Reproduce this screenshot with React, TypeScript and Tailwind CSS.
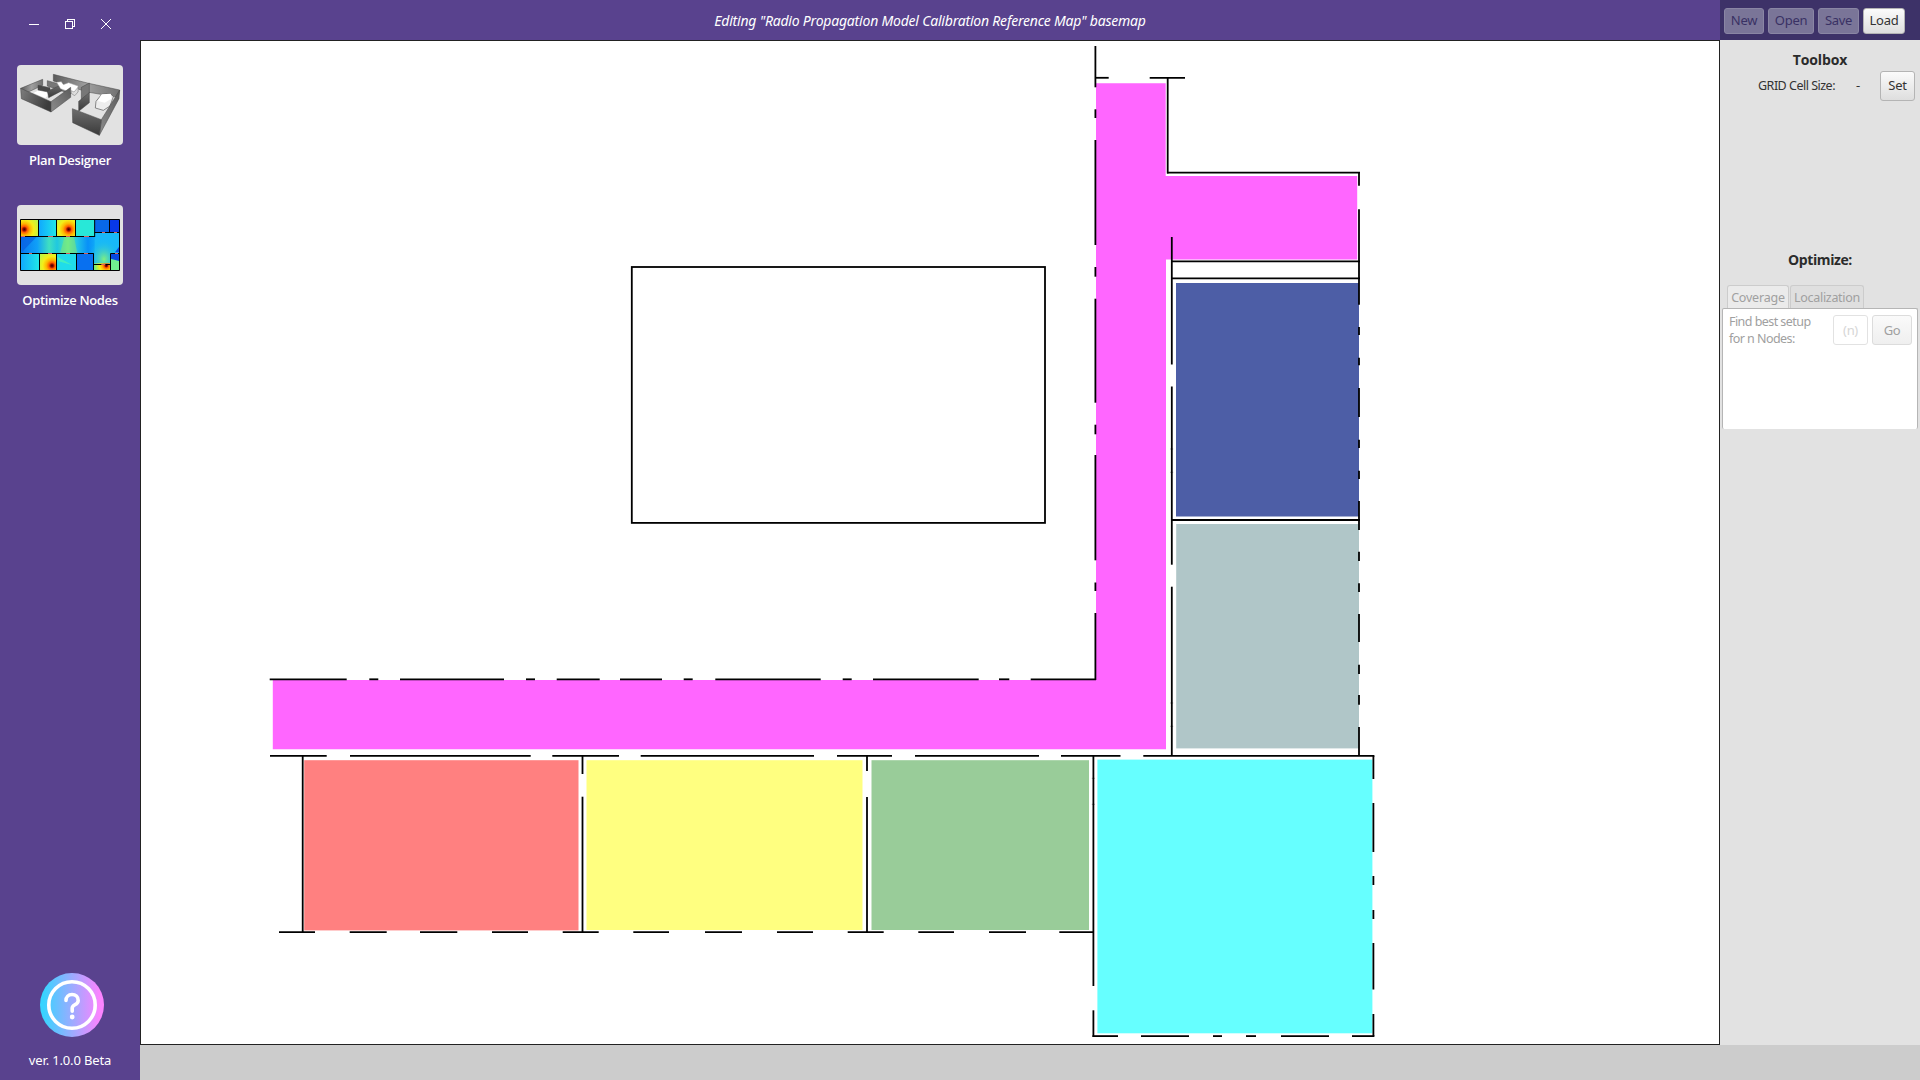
import React from 'react';

type Seg = [number, number];

const vWalls: { x: number; segs: Seg[] }[] = [
  { x: 1095.4, segs: [[46, 87.3], [109.3, 118], [140, 245], [267, 276.7], [298.7, 402.7], [424.7, 434.3], [455, 560.3], [582.5, 591], [613, 680]] },
  { x: 1167.7, segs: [[77, 173.5]] },
  { x: 1171.8, segs: [[237, 364.5], [386.5, 564.7], [586.7, 756]] },
  { x: 1359, segs: [[172, 185.7], [209.3, 304.7], [327, 335], [357.7, 365.3], [388, 417], [439.7, 448], [470.7, 479], [501, 530], [551.7, 561], [583.3, 592], [614, 642], [664.7, 674], [695, 704.7], [727, 756]] },
  { x: 302.7, segs: [[756, 932]] },
  { x: 582.5, segs: [[756, 774], [796.7, 932]] },
  { x: 867, segs: [[756, 771], [797, 932]] },
  { x: 1093.4, segs: [[756, 986], [1010.3, 1037]] },
  { x: 1373.4, segs: [[756, 779], [803, 852], [876, 885], [910, 919], [943, 989.5], [1014, 1036]] },
];

const hWalls: { y: number; segs: Seg[] }[] = [
  { y: 77.8, segs: [[1095, 1108.7], [1149.7, 1185]] },
  { y: 172.7, segs: [[1167, 1360]] },
  { y: 261.4, segs: [[1171, 1360]] },
  { y: 278.4, segs: [[1171, 1360]] },
  { y: 520, segs: [[1171, 1360]] },
  { y: 679.3, segs: [[269.7, 346.7], [369.3, 378.3], [400, 504], [526, 535], [556.7, 599.7], [620, 662], [683.7, 692.7], [715.3, 820.7], [842.7, 851.7], [873, 978.7], [999, 1009.3], [1030.7, 1096]] },
  { y: 755.8, segs: [[270, 326.7], [350, 530.7], [552.3, 619], [640.7, 814], [837, 892], [915, 1039], [1061, 1120.5], [1143.3, 1374.4]] },
  { y: 932.1, segs: [[279, 315], [349.7, 386.7], [420, 457.3], [492, 528], [562.7, 598.7], [633.3, 669], [705, 742], [777, 813], [847.7, 883.7], [918.3, 954], [989, 1026], [1059.3, 1093.5]] },
  { y: 1036.1, segs: [[1092.5, 1118], [1141, 1189], [1213, 1222], [1246, 1256], [1281, 1329], [1352, 1374.4]] },
];

// Wall joints, drawn as faint ticks across a vertical wall.
const joints: Seg[] = [[1171.8, 449], [1171.8, 472.3], [1171.8, 703], [1171.8, 726.3], [1093.4, 778.3], [1093.4, 804.3]];

function FloorPlan() {
  return (
    <svg className="block h-full w-full" viewBox="141 41 1578 1003">
      <path d="M1096 83.3H1165.7V176H1357.2V259.6H1166V749.3H272.8V680H1096Z" fill="#ff66ff" />
      <rect x="1176" y="283" width="183" height="233.5" fill="#4d5ea6" />
      <rect x="1176.2" y="524" width="182.8" height="224.4" fill="#b0c6c8" />
      <rect x="304.2" y="760.2" width="274.3" height="170.2" fill="#ff8080" />
      <rect x="586.5" y="760.2" width="276" height="169.8" fill="#ffff80" />
      <rect x="871.5" y="760.2" width="217.5" height="169.8" fill="#99cc99" />
      <rect x="1097.4" y="759.6" width="275" height="273.7" fill="#66ffff" />
      <g stroke="#000" strokeWidth="1.8">
        {vWalls.flatMap((w) => w.segs.map(([a, b]) => <line key={`v${w.x}-${a}`} x1={w.x} x2={w.x} y1={a} y2={b} />))}
        {hWalls.flatMap((w) => w.segs.map(([a, b]) => <line key={`h${w.y}-${a}`} y1={w.y} y2={w.y} x1={a} x2={b} />))}
        <rect x="631.8" y="267" width="413.2" height="255.9" fill="none" />
      </g>
      <g stroke="#000" strokeOpacity="0.35" strokeWidth="1">
        {joints.map(([x, y]) => <line key={`j${y}`} x1={x - 1.6} x2={x + 1.4} y1={y} y2={y} />)}
      </g>
    </svg>
  );
}

function PlanThumb() {
  return (
    <svg className="block h-full w-full" viewBox="51 195 318 240">
      <defs>
        <linearGradient id="wa" x1="0" y1="0" x2="1" y2="0.3"><stop offset="0" stopColor="#7d7d7d" /><stop offset="1" stopColor="#3c3c3c" /></linearGradient>
        <linearGradient id="wb" x1="0" y1="1" x2="1" y2="0"><stop offset="0" stopColor="#8c8c8c" /><stop offset="1" stopColor="#5c5c5c" /></linearGradient>
        <linearGradient id="wc" x1="0" y1="0" x2="1" y2="0"><stop offset="0" stopColor="#5a5a5a" /><stop offset="0.5" stopColor="#a0a0a0" /><stop offset="1" stopColor="#707070" /></linearGradient>
        <linearGradient id="wd" x1="0" y1="0" x2="0" y2="1"><stop offset="0" stopColor="#6e6e6e" /><stop offset="1" stopColor="#3a3a3a" /></linearGradient>
      </defs>
      <g stroke="#444" strokeWidth="1.5" strokeLinejoin="round">
        <path d="M62 265L128 238V256L72 282Z" fill="url(#wc)" />
        <path d="M142 242L212 262V282L142 258Z" fill="#777" />
        <path d="M160 223L262 249L359 270L354 292L262 276L160 243Z" fill="url(#wc)" />
        <path d="M100 279L118 270L150 280L136 294Z" fill="#fff" stroke="none" />
        <path d="M114 256L150 263V277L114 270Z" fill="#484848" />
        <path d="M142 273L186 254V272L146 293Z" fill="url(#wd)" />
        <path d="M170 247L184 245L190 254L206 248L234 258V276L224 287L208 276L182 266Z" fill="#fff" stroke="#aaa" />
        <path d="M214 272L222 276L234 262V276L224 287L214 280Z" fill="#ddd" stroke="#777" />
        <path d="M62 265L153 305V336L64 296Z" fill="url(#wa)" />
        <path d="M153 305L212 262V292L153 336Z" fill="url(#wb)" />
        <path d="M244 262L268 249V279L244 300Z" fill="#777" />
        <path d="M236 304L268 278V308L236 334Z" fill="url(#wd)" />
        <path d="M305 283L332 281L340 290L330 318L310 331L286 324L288 304Z" fill="#ededed" stroke="#555" strokeWidth="2" />
        <path d="M305 283L332 281L334 296L314 308L294 303Z" fill="#fff" stroke="none" />
        <path d="M359 270L304 359L298 406L357 296Z" fill="url(#wb)" />
        <path d="M217 326L304 359L298 406L218 368Z" fill="url(#wd)" />
      </g>
    </svg>
  );
}

function HeatThumb() {
  const hot: [number, number, number, number, number, number][] = [
    [61, 658, 54, 51, 73, 688],
    [170, 658, 57, 51, 206, 688],
    [118, 761, 52, 50, 156, 797],
    [281, 761, 50, 50, 319, 797],
  ];
  return (
    <svg className="block h-full w-full" viewBox="51 615 318 240">
      <defs>
        {hot.map(([, , , , cx, cy], i) => (
          <radialGradient key={i} id={`hot${i}`} gradientUnits="userSpaceOnUse" cx={cx} cy={cy} r={i === 3 ? 36 : 50}>
            <stop offset="0" stopColor="#300" /><stop offset="0.1" stopColor="#a01000" /><stop offset="0.18" stopColor="#ff5a00" />
            <stop offset="0.34" stopColor="#ffb400" /><stop offset="0.56" stopColor="#f4ee18" /><stop offset="1" stopColor={i === 3 ? '#70f080' : '#b0f850'} />
          </radialGradient>
        ))}
        <linearGradient id="cy" x1="0" x2="1" y1="0" y2="0"><stop offset="0" stopColor="#10a8ff" /><stop offset="1" stopColor="#20e8e8" /></linearGradient>
        <linearGradient id="hall" x1="0" x2="1" y1="0" y2="0">
          <stop offset="0" stopColor="#0878f0" /><stop offset="0.17" stopColor="#10a0f8" /><stop offset="0.29" stopColor="#40e0c0" /><stop offset="0.37" stopColor="#20c8e0" />
          <stop offset="0.48" stopColor="#58e8a8" /><stop offset="0.58" stopColor="#20c0e8" /><stop offset="0.68" stopColor="#0890f8" /><stop offset="0.85" stopColor="#18c8f8" /><stop offset="1" stopColor="#1090f8" />
        </linearGradient>
        <radialGradient id="glow"><stop offset="0" stopColor="#80f080" /><stop offset="1" stopColor="#10b8f8" stopOpacity="0" /></radialGradient>
        <clipPath id="plan"><rect x="61" y="658" width="298" height="153" /></clipPath>
      </defs>
      <g clipPath="url(#plan)">
        <rect x="61" y="658" width="298" height="153" fill="url(#hall)" />
        <rect x="284" y="697" width="75" height="114" fill="#18b8f8" />
        <ellipse cx="312" cy="778" rx="48" ry="62" fill="url(#glow)" />
        <path d="M62 710L110 710L66 756Z" fill="#0860e0" opacity=".7" />
        <path d="M194 710H222L232 760H180Z" fill="#a0f050" opacity=".4" />
        <rect x="116" y="658" width="54" height="51" fill="url(#cy)" />
        <rect x="227" y="658" width="57" height="51" fill="#28e8d8" />
        <rect x="284" y="658" width="45" height="39" fill="#0868e8" />
        <rect x="329" y="658" width="30" height="39" fill="#0838e8" />
        <rect x="61" y="761" width="57" height="50" fill="url(#cy)" />
        <rect x="170" y="761" width="60" height="50" fill="#20dcea" />
        <path d="M172 770L218 796L176 784Z" fill="#50f8b0" opacity=".7" />
        <rect x="230" y="761" width="51" height="50" fill="#0870f0" />
        <rect x="332" y="778" width="27" height="33" fill="#70f090" />
        <path d="M332 761H359V784L332 776ZM345 757L359 738V757Z" fill="#0848e0" />
        {hot.map(([x, y, w, h], i) => <rect key={i} x={x} y={i === 3 ? 790 : y} width={w} height={i === 3 ? 21 : h} fill={`url(#hot${i})`} />)}
      </g>
      <path d="M61.5 658.5H358.5V811.5H61.5ZM61 709.500H284M284 658V711M284 697.500H358M115.500 658V709M169.500 658V709M226.500 658V709M328.500 658V697M61 760.500H281M118.500 760V811M169.500 760V811M229.500 760V811M280.500 760V811M281 793.500H331M331.500 811V760.500H358" fill="none" stroke="#000" strokeWidth="3" />
      <path d="M63 709.500h12M144 709.500h15M198 709.500h12M252 709.500h15M87 760.500h9M144 760.500h12M198 760.500h12M252 760.500h12M306 697.500h9M342 697.500h9M345 760.500h9M304 793.500h12" stroke="#d86060" strokeWidth="3" />
    </svg>
  );
}

function HelpIcon() {
  return (
    <svg className="block size-16" viewBox="0 0 64 64">
      <defs>
        <linearGradient id="help" x1="0" x2="1" y1="0" y2="0"><stop offset="0.05" stopColor="#37d4ff" /><stop offset="0.93" stopColor="#fb84ff" /></linearGradient>
      </defs>
      <circle cx="32" cy="32" r="32" fill="url(#help)" />
      <g fill="none" stroke="#fff" strokeLinecap="round" strokeLinejoin="round">
        <circle cx="32" cy="32" r="23.200" strokeWidth="3.600" />
        <path d="M26 27.500C26 24 28.500 21.500 32 21.500S38.200 24 38.200 27.400C38.200 32 32.200 31.500 32.200 35V38.200" strokeWidth="3.600" />
      </g>
      <circle cx="32.200" cy="44" r="2.400" fill="#fff" />
    </svg>
  );
}

const base = 'flex shrink-0 items-center justify-center whitespace-nowrap rounded-[3px] border text-[13px] tracking-[-0.3px]';
const raised = 'border-[#b4b4b4] bg-linear-to-b from-[#fbfbfb] to-[#dedede] text-[#333]';

export default function App() {
  return (
    <div className="flex h-[1080px] w-[1920px] overflow-hidden bg-[#59428e] font-['Noto_Sans',sans-serif] text-[13px] text-[#333]">
      <aside className="flex w-[140px] shrink-0 flex-col text-white">
        <div className="flex h-[65px] pt-[19px] pl-[29px]">
          <svg className="block h-[10px] w-[82px]" viewBox="0 0 82 10" fill="none" stroke="#fff" strokeWidth="1" shapeRendering="crispEdges">
            <path d="M0 5.500H10M36.500 2.500H43.500V9.500H36.500ZM38.500 2.500V0.500H45.500V7.500H43.500" />
            <path d="M72 0L82 10M82 0L72 10" shapeRendering="auto" />
          </svg>
        </div>
        <div className="ml-[17px] h-20 w-[106px] overflow-hidden rounded-[4px] bg-[#e2e2e2]"><PlanThumb /></div>
        <div className="h-[60px] pt-[5px] text-center font-['Open_Sans',sans-serif] text-[13px] leading-5 font-semibold tracking-[-0.35px]">Plan Designer</div>
        <div className="ml-[17px] h-20 w-[106px] overflow-hidden rounded-[4px] bg-[#e2e2e2]"><HeatThumb /></div>
        <div className="pt-[5px] text-center font-['Open_Sans',sans-serif] text-[13px] leading-5 font-semibold tracking-[-0.35px]">Optimize Nodes</div>
        <div className="mt-auto flex h-[107px] flex-col pl-[40px]"><HelpIcon /></div>
        <div className="-mt-[30px] h-[30px] text-center text-[13px] leading-5 tracking-[-0.15px]">ver. 1.0.0 Beta</div>
      </aside>
      <div className="flex w-[1780px] flex-col">
        <div className="flex h-[1045px]">
          <main className="flex w-[1580px] flex-col">
            <header className="flex h-10 items-center justify-center text-[14px] tracking-[-0.21px] text-white italic"><span>Editing "Radio Propagation Model Calibration Reference Map" basemap</span></header>
            <div className="h-[1005px] border border-[#222] bg-white"><FloorPlan /></div>
          </main>
          <aside className="flex w-[200px] flex-col bg-[#e2e2e2]">
            <div className="flex h-10 gap-1 bg-[#3d3268] pt-2 pl-1">
              <button className={`${base} h-[26px] w-10 border-[#8a86a4] bg-[#7a7598] text-[#393164]`}>New</button>
              <button className={`${base} h-[26px] w-[46px] border-[#8a86a4] bg-[#7a7598] text-[#393164]`}>Open</button>
              <button className={`${base} h-[26px] w-[41px] border-[#8a86a4] bg-[#7a7598] text-[#393164]`}>Save</button>
              <button className={`${base} ${raised} h-[26px] w-[42px]`}>Load</button>
            </div>
            <div className="h-[30px] pt-[10px] text-center font-['Open_Sans',sans-serif] text-[14px] leading-5 font-bold tracking-[-0.15px] text-[#2b2b2b]">Toolbox</div>
            <div className="flex h-[32px] items-center pr-[5px] pl-[38px]">
              <span className="w-[98px] whitespace-nowrap text-[12.5px] tracking-[-0.5px]">GRID Cell Size:</span>
              <span>-</span>
              <button className={`${base} ${raised} ml-auto h-[30px] w-[35px]`}>Set</button>
            </div>
            <div className="mt-[148px] h-[35px] text-center font-['Open_Sans',sans-serif] text-[14px] leading-5 font-bold tracking-[-0.4px] text-[#2b2b2b]">Optimize:</div>
            <div className="flex h-[23px] gap-px pl-[7px] text-[12.5px] tracking-[-0.2px] text-[#a0a0a0]">
              <div className="flex w-[62px] items-center justify-center rounded-t-[3px] border border-b-0 border-[#ccc] bg-[#ebebeb] pt-[2px]">Coverage</div>
              <div className="flex w-[74px] items-center justify-center rounded-t-[3px] border border-b-0 border-[#ccc] bg-[#dfdfdf] pt-[2px] tracking-[-0.3px]">Localization</div>
            </div>
            <div className="mx-[2px] flex h-[121px] items-start rounded-[2px] border border-b-0 border-[#b5b5b5] bg-white pt-[6px] pr-[5px] pl-[6px] text-[#a0a0a0]">
              <div className="-mt-[2px] w-[104px] text-[12.5px] leading-[17px] tracking-[-0.55px]">Find best setup<br />for n Nodes:</div>
              <div className={`${base} h-[30px] w-[35px] border-[#e2e2e2] bg-white pt-[2px] text-[#d6d6d6]`}>(n)</div>
              <button className={`${base} ml-1 h-[30px] w-10 border-[#dcdcdc] bg-linear-to-b from-[#fafafa] to-[#efefef] pt-[2px] text-[#a0a0a0]`}>Go</button>
            </div>
          </aside>
        </div>
        <footer className="h-[35px] bg-[#ccc]" />
      </div>
    </div>
  );
}
